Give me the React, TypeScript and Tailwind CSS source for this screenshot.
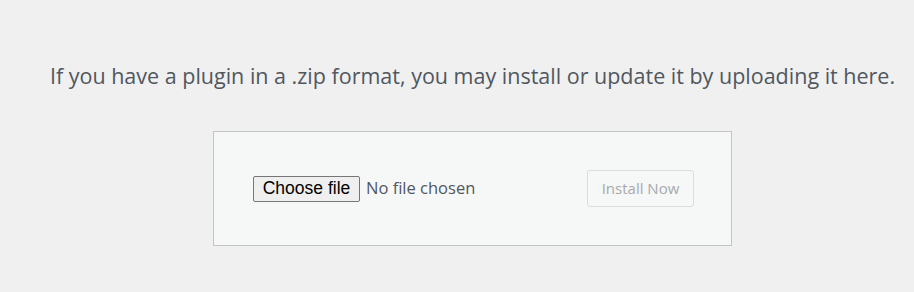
export default function App() {
  return (
    <div className="min-h-[292px] w-full bg-[#f0f0f1] pl-[31px] text-[#50575e]" style={{ fontFamily: '"Open Sans", "Noto Sans", sans-serif' }}>
      <div className="flex flex-col items-center pt-[60px]">
        <p className="text-[21.5px] leading-[32px] whitespace-nowrap">
          If you have a plugin in a .zip format, you may install or update it by uploading it here.
        </p>
        <form className="mt-[39px] flex h-[115px] w-[519px] items-center justify-between border border-[#c3c4c7] bg-[#f6f7f7] pl-[39px] pr-[37px]">
          <div className="flex items-center gap-[6px]">
            <span className="flex h-[26px] w-[107px] items-center justify-center rounded-[2px] border border-[#767676] bg-[#efefef] text-[17.5px] text-black" style={{ fontFamily: '"Liberation Sans", Arial, sans-serif' }}>
              Choose file
            </span>
            <span className="text-[16.5px]">No file chosen</span>
          </div>
          <button type="button" disabled className="h-[37px] w-[107px] rounded-[3px] border border-[#dcdcde] bg-[#f6f7f7] text-[15px] text-[#a7aaad]">
            Install Now
          </button>
        </form>
      </div>
    </div>
  );
}
